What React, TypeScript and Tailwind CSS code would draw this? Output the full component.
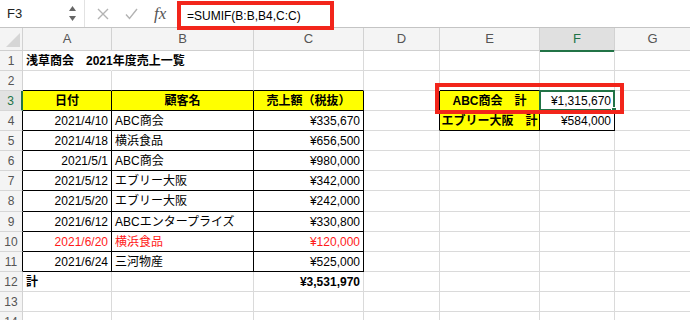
import React from "react";

type Spec = {
  t?: string;
  a?: "l" | "c" | "r";
  bold?: boolean;
  red?: boolean;
  y?: boolean;
  r?: "k" | "g" | "n";
  b?: "k" | "g";
  sel?: boolean;
};

const W = ["w-[89px]", "w-[142px]", "w-[110px]", "w-[76px]", "w-[100px]", "w-[75px]", "w-[76px]"];

const e: Spec = {};

const rows: { n: number; h: string; rh?: "k" | "sel"; cells: Spec[] }[] = [
  {
    n: 1,
    h: "h-[20px]",
    cells: [{ t: "浅草商会　2021年度売上一覧", bold: true, r: "n" }, e, e, e, e, e, e],
  },
  { n: 2, h: "h-[20px]", cells: [{ b: "k" }, { b: "k" }, { b: "k" }, e, { b: "k" }, { b: "k" }, e] },
  {
    n: 3,
    h: "h-[20px]",
    rh: "sel",
    cells: [
      { t: "日付", a: "c", bold: true, y: true, r: "k", b: "k" },
      { t: "顧客名", a: "c", bold: true, y: true, r: "k", b: "k" },
      { t: "売上額（税抜）", a: "c", bold: true, y: true, r: "k", b: "k" },
      { r: "k" },
      { t: "ABC商会　計", a: "c", bold: true, y: true, r: "k", b: "k" },
      { t: "¥1,315,670", a: "r", r: "k", b: "k", sel: true },
      e,
    ],
  },
  {
    n: 4,
    h: "h-[20px]",
    rh: "k",
    cells: [
      { t: "2021/4/10", a: "r", r: "k", b: "k" },
      { t: "ABC商会", r: "k", b: "k" },
      { t: "¥335,670", a: "r", r: "k", b: "k" },
      { r: "k" },
      { t: "エブリー大阪　計", a: "c", bold: true, y: true, r: "k", b: "k" },
      { t: "¥584,000", a: "r", r: "k", b: "k" },
      e,
    ],
  },
  {
    n: 5,
    h: "h-[20px]",
    rh: "k",
    cells: [
      { t: "2021/4/18", a: "r", r: "k", b: "k" },
      { t: "横浜食品", r: "k", b: "k" },
      { t: "¥656,500", a: "r", r: "k", b: "k" },
      e, e, e, e,
    ],
  },
  {
    n: 6,
    h: "h-[20px]",
    rh: "k",
    cells: [
      { t: "2021/5/1", a: "r", r: "k", b: "k" },
      { t: "ABC商会", r: "k", b: "k" },
      { t: "¥980,000", a: "r", r: "k", b: "k" },
      e, e, e, e,
    ],
  },
  {
    n: 7,
    h: "h-[20px]",
    rh: "k",
    cells: [
      { t: "2021/5/12", a: "r", r: "k", b: "k" },
      { t: "エブリー大阪", r: "k", b: "k" },
      { t: "¥342,000", a: "r", r: "k", b: "k" },
      e, e, e, e,
    ],
  },
  {
    n: 8,
    h: "h-[21px]",
    rh: "k",
    cells: [
      { t: "2021/5/20", a: "r", r: "k", b: "k" },
      { t: "エブリー大阪", r: "k", b: "k" },
      { t: "¥242,000", a: "r", r: "k", b: "k" },
      e, e, e, e,
    ],
  },
  {
    n: 9,
    h: "h-[20px]",
    rh: "k",
    cells: [
      { t: "2021/6/12", a: "r", r: "k", b: "k" },
      { t: "ABCエンタープライズ", r: "k", b: "k" },
      { t: "¥330,800", a: "r", r: "k", b: "k" },
      e, e, e, e,
    ],
  },
  {
    n: 10,
    h: "h-[20px]",
    rh: "k",
    cells: [
      { t: "2021/6/20", a: "r", r: "k", b: "k", red: true },
      { t: "横浜食品", r: "k", b: "k", red: true },
      { t: "¥120,000", a: "r", r: "k", b: "k", red: true },
      e, e, e, e,
    ],
  },
  {
    n: 11,
    h: "h-[20px]",
    rh: "k",
    cells: [
      { t: "2021/6/24", a: "r", r: "k", b: "k" },
      { t: "三河物産", r: "k", b: "k" },
      { t: "¥525,000", a: "r", r: "k", b: "k" },
      e, e, e, e,
    ],
  },
  {
    n: 12,
    h: "h-[20px]",
    cells: [{ t: "計", bold: true }, e, { t: "¥3,531,970", a: "r", bold: true }, e, e, e, e],
  },
  { n: 13, h: "h-[20px]", cells: [e, e, e, e, e, e, e] },
  { n: 14, h: "h-[20px]", cells: [e, e, e, e, e, e, e] },
];

function Cell({ s, i }: { s: Spec; i: number }) {
  const cls = [
    W[i],
    "shrink-0 h-full flex items-center border-r border-b whitespace-nowrap relative",
    s.r === "k" ? "border-r-black" : s.r === "n" ? "border-r-transparent" : "border-r-[#dadada]",
    s.b === "k" ? "border-b-black" : "border-b-[#dadada]",
    s.a === "r" ? "justify-end pr-[3px]" : s.a === "c" ? "justify-center" : "justify-start pl-[3px]",
    s.bold ? "font-bold" : "",
    s.red ? "text-[#ff1a1a]" : "text-black",
    s.y ? "bg-[#ffff00]" : "",
  ].join(" ");
  return (
    <div className={cls}>
      <span className="relative z-[1]">{s.t}</span>
      {s.sel && (
        <>
          <div className="absolute inset-[-1px] border-2 border-[#217346]" />
          <div className="absolute right-[-3px] bottom-[-3px] w-[6px] h-[6px] bg-[#217346] border border-white z-[2]" />
        </>
      )}
    </div>
  );
}

export default function App() {
  const cols = ["A", "B", "C", "D", "E", "F", "G"];
  return (
    <div className="w-[690px] h-[320px] overflow-hidden bg-white relative font-['Liberation_Sans','Noto_Sans_CJK_JP',sans-serif] text-[12px]">
      {/* toolbar */}
      <div className="h-[28px] flex items-start border-b border-b-[#c4c4c4] bg-white relative z-10">
        <div className="w-[85px] h-[27px] flex items-center border-r border-r-[#e2e2e2] bg-white">
          <span className="pl-[7px] text-[13px] text-[#222] flex-1">F3</span>
          <div className="flex flex-col gap-[5px] mr-[8px]">
            <svg width="7" height="5" viewBox="0 0 7 5">
              <path d="M3.5 0 L7 5 L0 5 Z" fill="#666" />
            </svg>
            <svg width="7" height="5" viewBox="0 0 7 5">
              <path d="M0 0 L7 0 L3.5 5 Z" fill="#666" />
            </svg>
          </div>
        </div>
        <div className="w-[92px] h-[27px] flex items-center">
          <svg className="ml-[12px]" width="12" height="12" viewBox="0 0 12 12">
            <path d="M1 1 L11 11 M11 1 L1 11" stroke="#b3b3b3" strokeWidth="1.4" fill="none" />
          </svg>
          <svg className="ml-[16px]" width="13" height="12" viewBox="0 0 13 12">
            <path d="M1 6.5 L4.5 10.5 L12 1" stroke="#b3b3b3" strokeWidth="1.4" fill="none" />
          </svg>
          <span className="ml-[16px] font-['Liberation_Serif',serif] italic text-[17px] text-[#555] leading-none">fx</span>
        </div>
        <div className="mt-[1px] w-[157px] h-[29px] border-[4px] border-[#f2251b] bg-white flex items-center pl-[6px]">
          <span className="text-[12px] text-black">=SUMIF(B:B,B4,C:C)</span>
        </div>
      </div>

      {/* column header */}
      <div className="h-[23px] flex bg-[#f4f4f4] border-b border-b-[#cfcfcf]">
        <div className="w-[23px] shrink-0 h-full border-r border-r-[#d2d2d2] flex items-end justify-end pr-[2px] pb-[3px]">
          <svg width="14" height="14" viewBox="0 0 14 14">
            <path d="M14 0 L14 14 L0 14 Z" fill="#d6d6d6" />
          </svg>
        </div>
        {cols.map((c, i) =>
          c === "F" ? (
            <div
              key={c}
              className={`${W[i]} shrink-0 h-[24px] flex items-center justify-center bg-[#e0e0e0] border-r border-r-[#d2d2d2] border-b-2 border-b-[#217346] text-[#217346] text-[13px]`}
            >
              {c}
            </div>
          ) : (
            <div
              key={c}
              className={`${W[i]} shrink-0 h-full flex items-center justify-center border-r border-r-[#d2d2d2] text-[#555] text-[13px]`}
            >
              {c}
            </div>
          )
        )}
      </div>

      {/* rows */}
      {rows.map((row) => (
        <div key={row.n} className={`${row.h} flex`}>
          <div
            className={[
              "w-[23px] shrink-0 h-full flex items-center justify-center border-b border-b-[#d6d6d6] text-[12px]",
              row.rh === "sel"
                ? "bg-[#e2e2e2] border-r-2 border-r-[#217346] text-[#217346]"
                : row.rh === "k"
                ? "bg-[#f4f4f4] border-r border-r-black text-[#555]"
                : "bg-[#f4f4f4] border-r border-r-[#d2d2d2] text-[#555]",
            ].join(" ")}
          >
            {row.n}
          </div>
          {row.cells.map((s, i) => (
            <Cell key={i} s={s} i={i} />
          ))}
        </div>
      ))}

      {/* annotation box */}
      <div className="absolute left-[435px] top-[83px] w-[189px] h-[31px] border-[4px] border-[#f2251b] pointer-events-none z-20" />
    </div>
  );
}
